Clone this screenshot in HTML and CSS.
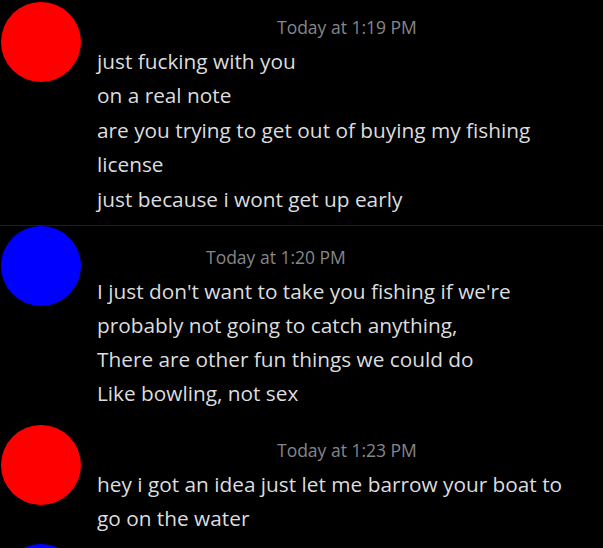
FILE: index.html
```html
<!DOCTYPE html>
<html>
<head>
<meta charset="utf-8">
<link rel="stylesheet" href="styles.css">
</head>
<body>
<div class="chat">
  <div class="msg msg-1 divided">
    <div class="avatar red"></div>
    <div class="content">
      <div class="ts ts-a">Today at 1:19 PM</div>
      <div class="line">just fucking with you</div>
      <div class="line">on a real note</div>
      <div class="line">are you trying to get out of buying my fishing<br>license</div>
      <div class="line">just because i wont get up early</div>
    </div>
  </div>
  <div class="msg msg-2">
    <div class="avatar blue"></div>
    <div class="content">
      <div class="ts ts-b">Today at 1:20 PM</div>
      <div class="line">I just don't want to take you fishing if we're<br>probably not going to catch anything,</div>
      <div class="line">There are other fun things we could do</div>
      <div class="line">Like bowling, not sex</div>
    </div>
  </div>
  <div class="msg msg-3">
    <div class="avatar red"></div>
    <div class="content">
      <div class="ts ts-a">Today at 1:23 PM</div>
      <div class="line">hey i got an idea just let me barrow your boat to<br>go on the water</div>
    </div>
  </div>
  <div class="msg msg-4">
    <div class="avatar blue"></div>
  </div>
</div>
</body>
</html>
```
FILE: styles.css
```css
html, body {
  margin: 0;
  padding: 0;
  background: #000;
  overflow: hidden;
}
body {
  width: 603px;
  height: 548px;
  font-family: "Open Sans", "Noto Sans", sans-serif;
  color: #dcddde;
}
.chat {
  display: flex;
  flex-direction: column;
}
.msg {
  display: flex;
  align-items: flex-start;
  gap: 16px;
}
.avatar {
  flex: none;
  width: 80px;
  height: 80px;
  border-radius: 50%;
  margin-left: 1px;
}
.red { background: #ff0000; }
.blue { background: #0000ff; }
.content {
  display: flex;
  flex-direction: column;
}
.ts {
  font-size: 17.5px;
  line-height: 34px;
  color: #85878a;
  white-space: nowrap;
}
.ts-a { margin-left: 180px; }
.ts-b { margin-left: 109px; }
.line {
  font-size: 20.8px;
  line-height: 34px;
  white-space: nowrap;
}
.msg-1 { padding-top: 2px; padding-bottom: 9px; }
.msg-1 .content { padding-top: 8px; }
.msg-1 .line { line-height: 34.4px; }
.divided { border-bottom: 1px solid #1c1c1e; }
.msg-2 .content { padding-top: 14px; }
.msg-3 { margin-top: 15px; }
.msg-3 .content { padding-top: 8px; }
.msg-4 { margin-top: 9px; }
```
